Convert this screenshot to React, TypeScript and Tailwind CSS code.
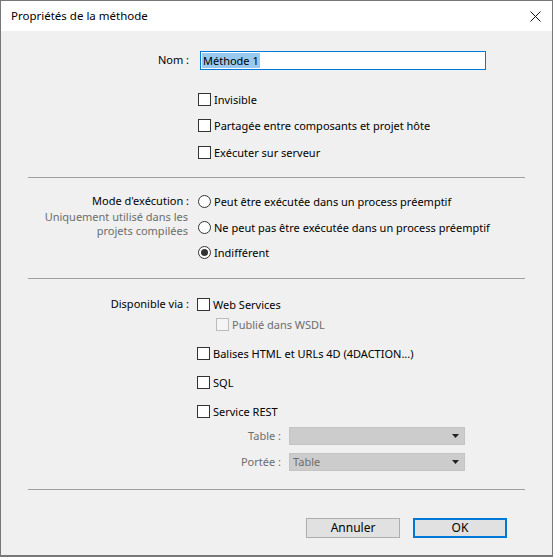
import React from "react";

function Check({ label, disabled }: { label: string; disabled?: boolean }) {
  return (
    <div className="flex items-center h-[13px] gap-[3px]">
      <span className={`w-[13px] h-[13px] shrink-0 border ${disabled ? "border-[#bcbcbc] bg-[#f4f4f4]" : "border-[#333333] bg-white"}`} />
      <span className={`leading-[13px] whitespace-nowrap -mt-px ${disabled ? "text-[#6d6d6d]" : "text-black"}`}>{label}</span>
    </div>
  );
}

function Radio({ label, checked }: { label: string; checked?: boolean }) {
  return (
    <div className="flex items-center h-[13px] gap-[3px]">
      <span className="w-[13px] h-[13px] shrink-0 rounded-full border border-[#333333] bg-white flex items-center justify-center">
        {checked && <span className="w-[7px] h-[7px] rounded-full bg-[#333333]" />}
      </span>
      <span className="leading-[13px] whitespace-nowrap -mt-px">{label}</span>
    </div>
  );
}

function Select({ value }: { value?: string }) {
  return (
    <div className="w-[176px] h-[18px] bg-[#cccccc] border border-[#c4c4c4] flex items-center justify-between pl-[3px] pr-[5px]">
      <span className="text-[#6d6d6d] leading-[16px]">{value}</span>
      <svg width="7" height="4" viewBox="0 0 7 4"><path d="M0 0h7L3.5 4z" fill="#222" /></svg>
    </div>
  );
}

function Separator({ mt }: { mt: string }) {
  return <div className={`${mt} mx-[27px] h-px bg-[#a0a0a0]`} />;
}

export default function App() {
  return (
    <div className="w-[554px] h-[557px] bg-white" style={{ fontFamily: '"Noto Sans", "Open Sans", sans-serif' }}>
      <div className="w-[553px] h-[557px] border border-b-2 border-[#777777] flex flex-col text-[11px] text-black bg-[#f0f0f0]">
        <div className="h-[30px] bg-white flex items-center justify-between pl-[10px] pr-[11px] shrink-0">
          <span className="text-[11.5px]">Propriétés de la méthode</span>
          <svg width="11" height="11" viewBox="0 0 11 11"><path d="M0.5 0.5l10 10M10.5 0.5l-10 10" stroke="#111" strokeWidth="1" /></svg>
        </div>

        {/* Nom */}
        <div className="mt-[20px] flex items-center h-[19px]">
          <div className="w-[190px] text-right pr-[2px]">Nom :</div>
          <div className="ml-[9px] w-[286px] h-[19px] bg-white border border-[#0078d7] flex items-center px-px">
            <span className="bg-[#99c9ef] leading-[15px] px-px">Méthode 1</span>
          </div>
        </div>

        <div className="pl-[197px] flex flex-col">
          <div className="mt-[23px]"><Check label="Invisible" /></div>
          <div className="mt-[13px]"><Check label="Partagée entre composants et projet hôte" /></div>
          <div className="mt-[14px]"><Check label="Exécuter sur serveur" /></div>
        </div>

        <Separator mt="mt-[18px]" />

        {/* Mode d'exécution */}
        <div className="mt-[17px] flex">
          <div className="w-[190px] text-right flex flex-col">
            <div className="h-[13px] leading-[13px] pr-[2px] -mt-px">Mode d'exécution :</div>
            <div className="mt-[3px] text-[#6d6d6d] leading-[14px] pr-[3px] whitespace-nowrap">
              Uniquement utilisé dans les<br />projets compilées
            </div>
          </div>
          <div className="ml-[7px] flex flex-col">
            <Radio label="Peut être exécutée dans un process préemptif" />
            <div className="mt-[13px]"><Radio label="Ne peut pas être exécutée dans un process préemptif" /></div>
            <div className="mt-[12px]"><Radio label="Indifférent" checked /></div>
          </div>
        </div>

        <Separator mt="mt-[19px]" />

        {/* Disponible via */}
        <div className="mt-[19px] flex">
          <div className="w-[190px] text-right h-[13px] leading-[13px] pr-[2px] -mt-px">Disponible via :</div>
          <div className="ml-[6px] flex flex-col">
            <Check label="Web Services" />
            <div className="mt-[7px] ml-[19px]"><Check label="Publié dans WSDL" disabled /></div>
            <div className="mt-[16px]"><Check label="Balises HTML et URLs 4D (4DACTION...)" /></div>
            <div className="mt-[16px]"><Check label="SQL" /></div>
            <div className="mt-[16px]"><Check label="Service REST" /></div>
          </div>
        </div>

        <div className="mt-[9px] flex items-center">
          <div className="w-[282px] text-right text-[#6d6d6d] pr-[2px]">Table :</div>
          <div className="ml-[6px]"><Select /></div>
        </div>
        <div className="mt-[8px] flex items-center">
          <div className="w-[282px] text-right text-[#6d6d6d] pr-[2px]">Portée :</div>
          <div className="ml-[6px]"><Select value="Table" /></div>
        </div>

        <Separator mt="mt-[18px]" />

        <div className="mt-[28px] flex justify-end gap-[13px] pr-[45px]">
          <button className="w-[94px] h-[20px] bg-[#e1e1e1] border border-[#adadad] leading-[18px] text-[12px]">Annuler</button>
          <button className="w-[94px] h-[20px] bg-[#e1e1e1] border-2 border-[#0078d7] leading-[16px] text-[12px]">OK</button>
        </div>
      </div>
    </div>
  );
}
